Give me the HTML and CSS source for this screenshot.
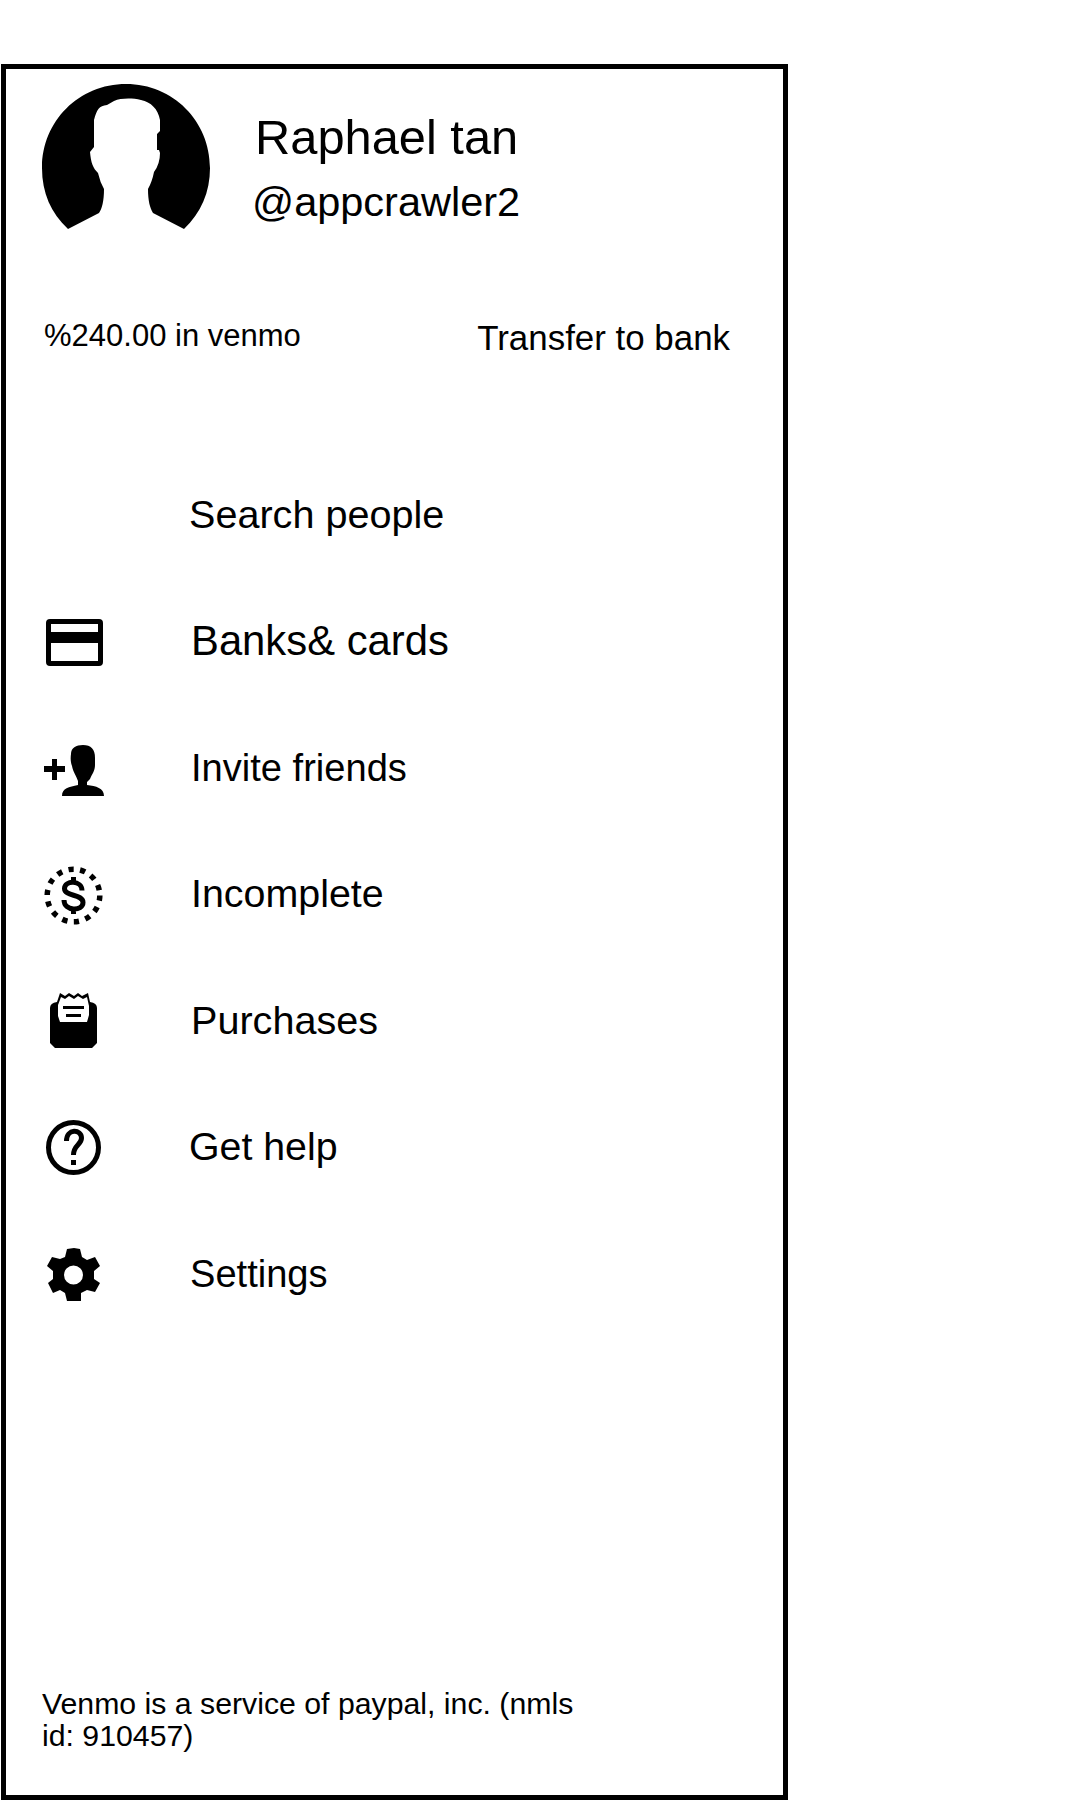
FILE: index.html
```html
<!DOCTYPE html>
<html lang="en">
<head>
<meta charset="utf-8">
<title>Account menu</title>
<link rel="stylesheet" href="styles.css">
</head>
<body>
<aside class="drawer">
  <header class="profile">
    <svg class="avatar" viewBox="42 83 169 147" aria-hidden="true"><path d="M68 229C51 213 42 193 42 168C42 121 79 84 126 84S210 121 210 168C210 192 201 213 184 229L153 213C150 208 148 201 148 189Q152 182 154 172Q160 164 160 153L159 150H157V134L160 131V120C158 109 151 102 141 100C132 98 121 98 114 101L107 105C99 106 97 109 94 120V147L90 152C91 163 93 168 98 173Q100 182 104 189C104 201 102 209 99 213Z"/></svg>
    <div class="identity">
      <h1 class="name">Raphael tan</h1>
      <p class="handle">@appcrawler2</p>
    </div>
  </header>
  <section class="balance">
    <span class="amount">%240.00 in venmo</span>
    <a class="transfer">Transfer to bank</a>
  </section>
  <nav class="menu">
    <a class="item"><span class="icon"></span><span class="label search">Search people</span></a>
    <a class="item"><svg class="icon" viewBox="30 601 90 80"><path fill-rule="evenodd" d="M50 619H99Q103 619 103 623V662Q103 666 99 666H50Q46 666 46 662V623Q46 619 50 619ZM51 624V632H98V624ZM51 643V661H98V643Z"/></svg><span class="label banks">Banks&amp; cards</span></a>
    <a class="item"><svg class="icon" viewBox="30 727 90 80"><path d="M52 759H57V766H65V772H57V780H52V772H44V766H52ZM78 781C76 775 73 772 72 766Q70 761 71 754C71 748 76 745 83 745C91 745 95 749 95 758V765C95 771 92 774 90 779L87 782V785C96 786 104 788 104 796H62C62 788 69 787 78 785Z"/></svg><span class="label invite">Invite friends</span></a>
    <a class="item"><svg class="icon" viewBox="30 854 90 80"><circle class="ring" cx="73.5" cy="895.5" r="26.300"/><path class="dollar" d="M82 890.500C82 880 64.500 880 64.500 888.500C64.500 897 83 893.500 83 902.500C83 911.500 64 911.500 64 900M73.500 877V882M73.500 908V914"/></svg><span class="label incomplete">Incomplete</span></a>
    <a class="item"><svg class="icon" viewBox="30 980 90 80"><path fill-rule="evenodd" d="M57 1002L60 993L65 996L69 993L74 996L78 993L82 996L88 993L90 1002Q97 1003 97 1008V1043L92 1048H55L50 1043V1008Q50 1003 57 1002ZM61 997L58 1005V1016L60 1022H87L89 1015V1006L87 997L83 999L78 996L74 999L69 996L65 999Z"/><path d="M63 1006H84V1009H63ZM66 1014H81V1017H66Z"/></svg><span class="label purchases">Purchases</span></a>
    <a class="item"><svg class="icon" viewBox="30 1108 90 80"><circle class="line" cx="73.500" cy="1148.500" r="25"/><path class="line" d="M66.500 1142C66.500 1129 81.500 1130 81.500 1139C81.500 1146 73.500 1146 73.500 1156"/><path d="M71 1161H76V1166H71Z"/></svg><span class="label help">Get help</span></a>
    <a class="item"><svg class="icon" viewBox="30 1233 90 80"><path fill-rule="evenodd" d="M67 1249L74 1248L80 1249L82 1257L87 1260L95 1257L100 1266L94 1271V1279L100 1283L95 1292L87 1290L81 1293V1301H67L65 1293L60 1290L53 1293L48 1283L53 1279V1271L47 1266L52 1257L60 1259L65 1257ZM73.500 1265.500A9.500 9.500 0 1 0 73.500 1284.500A9.500 9.500 0 1 0 73.500 1265.500Z"/></svg><span class="label settings">Settings</span></a>
  </nav>
  <footer class="legal">Venmo is a service of paypal, inc. (nmls<br>id: 910457)</footer>
</aside>
</body>
</html>
```
FILE: styles.css
```css
* { box-sizing: border-box; }
body {
  margin: 0;
  height: 1800px;
  padding: 64px 0 0 1px;
  background: #fff;
  color: #000;
  font-family: "Liberation Sans", Arial, sans-serif;
}
.drawer {
  display: flex;
  flex-direction: column;
  width: 787px;
  height: 1736px;
  border: 5px solid #000;
}
.profile {
  display: flex;
  height: 236px;
  padding: 14px 0 0 36px;
}
.avatar { width: 169px; height: 147px; }
.identity { padding: 22px 0 0 41px; }
.name, .handle { margin: 0; font-weight: 400; white-space: nowrap; }
.name { font-size: 48.8px; line-height: 64px; padding-left: 3px; }
.handle { font-size: 41.5px; line-height: 66px; }
.balance {
  display: flex;
  justify-content: space-between;
  height: 146px;
  padding: 6px 53px 0 38px;
  line-height: 50px;
}
.amount { font-size: 31px; }
.transfer { font-size: 34.9px; padding-top: 2px; }
.menu { display: grid; grid-auto-rows: 126.5px; }
.item { display: flex; align-items: center; height: 126.5px; }
.icon { width: 90px; height: 80px; margin: 0 70px 0 24px; flex: none; }
.ring { fill: none; stroke: #000; stroke-width: 5.5; stroke-dasharray: 5.3 6.503; }
.dollar { fill: none; stroke: #000; stroke-width: 5; }
.line { fill: none; stroke: #000; stroke-width: 5; }
.label { font-size: 39.6px; line-height: 50px; margin-left: 1px; white-space: nowrap; }
.search { margin-left: -1px; }
.banks { font-size: 41.8px; }
.invite { font-size: 38.1px; padding-top: 2px; }
.incomplete { font-size: 39.4px; padding-bottom: 2px; }
.purchases { padding-bottom: 1px; }
.help { font-size: 39.3px; margin-left: -1px; padding-bottom: 1px; }
.settings { font-size: 38.1px; margin-left: 0; padding-top: 1px; }
.legal { margin: auto 0 43px 36px; font-size: 30.25px; line-height: 32px; white-space: nowrap; }
```
